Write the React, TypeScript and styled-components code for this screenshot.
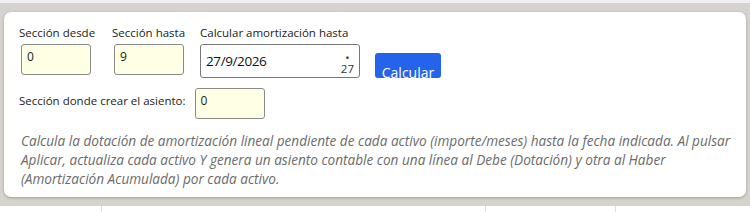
import React from "react";
import styled, { createGlobalStyle } from "styled-components";

const GlobalStyle = createGlobalStyle`
  html, body { margin: 0; padding: 0; }
  body {
    background: #d6d3ce;
    font-family: "Open Sans", "Noto Sans", sans-serif;
    width: 750px;
    height: 212px;
    overflow: hidden;
  }
`;

const Page = styled.div`
  width: 750px;
  height: 212px;
  border-top: 3px solid #f0f0f4;
  box-sizing: border-box;
  display: flex;
  flex-direction: column;
`;

const Card = styled.div`
  margin: 9px 4px 0 4px;
  background: #fff;
  border-radius: 7px;
  box-shadow: 0 1px 3px rgba(0, 0, 0, 0.25);
  padding: 13px 15px 10px 15px;
  height: 185px;
  box-sizing: border-box;
`;

const Row = styled.div`
  display: flex;
  align-items: flex-start;
`;

const Field = styled.div<{ $w: number }>`
  display: flex;
  flex-direction: column;
  width: ${(p) => p.$w}px;
`;

const Label = styled.label`
  font-size: 11.5px;
  color: #222;
  line-height: 16px;
  margin-bottom: 3px;
  white-space: nowrap;
`;

const YellowInput = styled.div`
  width: 70px;
  height: 31px;
  box-sizing: border-box;
  background: #ffffe6;
  border: 1px solid #8a8a8a;
  border-radius: 3px;
  font-size: 12px;
  color: #222;
  padding: 3px 0 0 5px;
  margin-left: 2px;
`;

const DateBox = styled.div`
  width: 160px;
  height: 34px;
  box-sizing: border-box;
  border: 1px solid #777;
  border-radius: 3px;
  background: #fff;
  display: flex;
  align-items: center;
  justify-content: space-between;
  padding: 0 5px 0 5px;
`;

const DateText = styled.span`
  font-size: 13.5px;
  letter-spacing: -0.4px;
  color: #111;
`;

const Spin = styled.span`
  display: flex;
  flex-direction: column;
  align-items: center;
  font-size: 11.5px;
  line-height: 11px;
  color: #333;
  margin-top: 4px;
`;

const Button = styled.button`
  margin: 28px 0 0 15px;
  width: 66px;
  height: 25px;
  background: #2563eb;
  color: #fff;
  border: none;
  border-radius: 3px;
  font-family: inherit;
  font-size: 14px;
  padding: 0;
  overflow: hidden;
  display: block;
`;

const ButtonText = styled.span`
  display: block;
  line-height: 18px;
  transform: translateY(7px);
`;

const SecondRow = styled.div`
  display: flex;
  align-items: flex-start;
  margin-top: 10px;
`;

const InlineLabel = styled.span`
  font-size: 11.5px;
  line-height: 16px;
  color: #222;
  margin-right: 7px;
  margin-top: 5px;
`;

const Note = styled.p`
  margin: 12px 0 0 2px;
  font-size: 13.6px;
  line-height: 19px;
  font-style: italic;
  color: #6b6b6b;
`;

const Table = styled.div`
  margin-top: 9px;
  flex: 1;
  background: #fff;
  display: grid;
  grid-template-columns: 102px 384px 130px 1fr;
`;

const Cell = styled.div<{ $last?: boolean }>`
  border-right: ${(p) => (p.$last ? "none" : "1px solid #dcdcdc")};
`;

export default function App() {
  return (
    <Page>
      <GlobalStyle />
      <Card>
        <Row>
          <Field $w={93}>
            <Label>Sección desde</Label>
            <YellowInput>0</YellowInput>
          </Field>
          <Field $w={88}>
            <Label>Sección hasta</Label>
            <YellowInput>9</YellowInput>
          </Field>
          <Field $w={160}>
            <Label>Calcular amortización hasta</Label>
            <DateBox>
              <DateText>27/9/2026</DateText>
              <Spin>
                <span>•</span>
                <span>27</span>
              </Spin>
            </DateBox>
          </Field>
          <Button>
            <ButtonText>Calcular</ButtonText>
          </Button>
        </Row>
        <SecondRow>
          <InlineLabel>Sección donde crear el asiento:</InlineLabel>
          <YellowInput>0</YellowInput>
        </SecondRow>
        <Note>
          Calcula la dotación de amortización lineal pendiente de cada activo (importe/meses) hasta la
          fecha indicada. Al pulsar Aplicar, actualiza cada activo Y genera un asiento contable con una
          línea al Debe (Dotación) y otra al Haber (Amortización Acumulada) por cada activo.
        </Note>
      </Card>
      <Table>
        <Cell />
        <Cell />
        <Cell />
        <Cell $last />
      </Table>
    </Page>
  );
}
